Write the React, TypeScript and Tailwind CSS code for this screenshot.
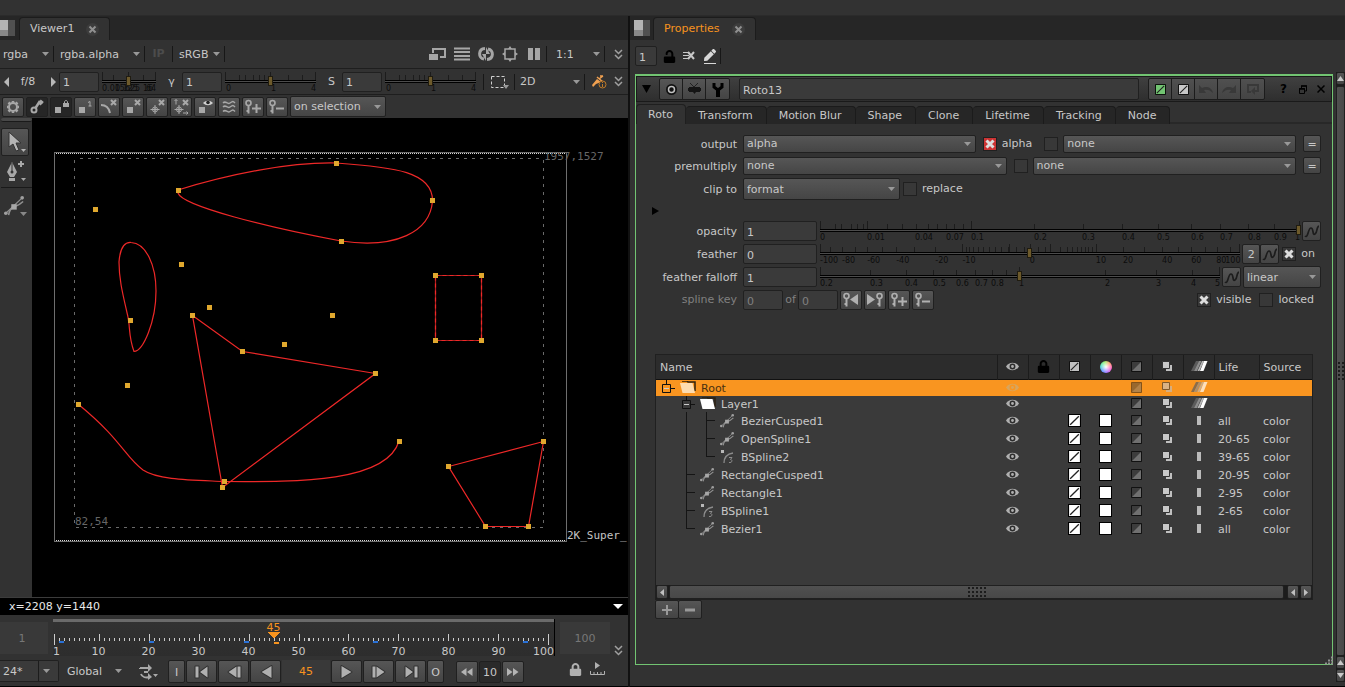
import React from "react";
import { FaLock, FaUnlock, FaPen } from "react-icons/fa";

const field =
  "min-w-0 rounded-xs border border-[#202020] bg-[#3a3a3a] px-[3px] pt-0.5 outline-none disabled:text-[#808080]";
const raised =
  "flex shrink-0 items-center justify-center rounded-xs border border-[#202020] bg-linear-to-b from-[#565656] to-[#444444]";

type IconProps = { children: React.ReactNode; w?: number; h?: number; className?: string };

const Icon = ({ children, w = 18, h = 18, className = "" }: IconProps) => (
  <svg
    width={w}
    height={h}
    viewBox={`0 0 ${w} ${h}`}
    fill="none"
    stroke="currentColor"
    className={`shrink-0 ${className}`}
    aria-hidden="true"
  >
    {children}
  </svg>
);

const Caret = ({ className = "" }: { className?: string }) => (
  <Icon w={7} h={4} className={className}>
    <path d="M0 0h7L3.500 4z" fill="currentColor" stroke="none" />
  </Icon>
);

const Sep = () => <span className="h-4 w-px shrink-0 bg-[#171717]" />;

type SelectProps = { label: string; value: string; className?: string; flat?: boolean; id?: string };

const Select = ({ label, value, className = "", flat = false, id }: SelectProps) => (
  <span
    className={`grid items-center ${
      flat ? "" : "rounded-xs border border-[#202020] bg-linear-to-b from-[#565656] to-[#454545]"
    } ${className}`}
  >
    <select
      id={id}
      aria-label={label}
      className="h-full w-full min-w-0 appearance-none bg-transparent px-[3px] pt-px outline-none [grid-area:1/1]"
    >
      <option>{value}</option>
    </select>
    <Caret className="pointer-events-none mr-1 justify-self-end text-[#999999] [grid-area:1/1]" />
  </span>
);

type CheckProps = { label: string; text?: boolean; checked?: boolean; red?: boolean };

const Check = ({ label, text = false, checked = false, red = false }: CheckProps) => (
  <label className="flex shrink-0 items-center gap-[5px]">
    <span className="grid place-items-center">
      <input
        type="checkbox"
        aria-label={label}
        defaultChecked={checked}
        className={`peer h-[14px] w-[14px] appearance-none border border-[#202020] [grid-area:1/1] ${
          red ? "bg-[#cc3333]" : "bg-[#383838]"
        }`}
      />
      <svg
        viewBox="0 0 10 10"
        className="pointer-events-none hidden h-[10px] w-[10px] [grid-area:1/1] peer-checked:block"
      >
        <path d="M1.500 1.500l7 7M8.500 1.500l-7 7" stroke="#dddddd" strokeWidth="3" />
      </svg>
    </span>
    {text && <span>{label}</span>}
  </label>
);

type RulerProps = {
  name: string;
  width: number;
  ticks: number[];
  tall: number[];
  labels: [number, string][];
  at: number;
  className?: string;
};

// Tick positions are given on a scale of `width` and drawn as percentages
const Ruler = ({ name, width, ticks, tall, labels, at, className = "" }: RulerProps) => {
  const pct = (n: number) => `${(n / width) * 100}%`;
  return (
    <div className={`grid h-5 min-w-0 ${className}`}>
      <svg className="h-5 w-full overflow-visible [grid-area:1/1]" shapeRendering="crispEdges">
        {ticks.map((t) => (
          <rect key={t} x={pct(t)} y="3" width="1" height="5" fill="#1c1c1c" />
        ))}
        {tall.map((t) => (
          <rect key={t} x={pct(t)} y="0" width="1" height="8" fill="#1c1c1c" />
        ))}
        <rect x="0" y="8" width="100%" height="1" fill="#000" />
        <rect x="0" y="9" width="100%" height="1" fill="#4c4c4c" />
        <rect x="0" y="10" width="100%" height="1" fill="#000" />
        {labels.map(([t, s]) => (
          <text key={s} x={pct(t)} y="19" fontSize="8" fill="#0c0c0c">
            {s}
          </text>
        ))}
      </svg>
      <input
        type="range"
        aria-label={name}
        min={0}
        max={width}
        defaultValue={at}
        className="h-[18px] w-full min-w-0 appearance-none bg-transparent [grid-area:1/1] [&::-webkit-slider-thumb]:h-[10px] [&::-webkit-slider-thumb]:w-[5px] [&::-webkit-slider-thumb]:appearance-none [&::-webkit-slider-thumb]:border [&::-webkit-slider-thumb]:border-[#201c10] [&::-webkit-slider-thumb]:bg-[#6d5a2b]"
      />
    </div>
  );
};

const KeyGlyph = () => (
  <>
    <circle cx="4.500" cy="5" r="2.500" strokeWidth="1.600" />
    <path d="M4.500 7.500v8M4.500 13h-2" strokeWidth="2" />
  </>
);

const KeyPlus = () => (
  <Icon>
    <KeyGlyph />
    <path d="M8 10.500h9M12.500 6v9" strokeWidth="2" />
  </Icon>
);

const KeyMinus = () => (
  <Icon>
    <KeyGlyph />
    <path d="M8 10.500h8" strokeWidth="2" />
  </Icon>
);

const Cross = () => <path d="M11 2l5 5M16 2l-5 5" strokeWidth="2" />;

const Target = () => (
  <>
    <circle cx="7" cy="11.500" r="2.500" />
    <path d="M7 7v9M2.500 11.500h9" />
    <path d="M6 10.500h2v2H6z" fill="currentColor" stroke="none" />
  </>
);

const shapeTools = [
  {
    name: "Settings",
    icon: (
      <Icon>
        <circle cx="9" cy="9" r="4" strokeWidth="2" />
        <path
          d="M9 3v1.500M9 13.500V15M3 9h1.500M13.500 9H15M4.500 4.500l1.500 1.500M12 12l1.500 1.500M13.500 4.500L12 6M4.500 13.500L6 12"
          strokeWidth="2.500"
        />
      </Icon>
    ),
  },
  {
    name: "Autokey",
    dark: true,
    icon: (
      <Icon>
        <circle cx="6" cy="12" r="2.500" strokeWidth="2" />
        <path d="M7.500 10L12 3M10.500 4.500l3 2M12 2.500l3 2.500" strokeWidth="2.500" />
      </Icon>
    ),
  },
  {
    name: "Lock handles",
    dark: true,
    icon: (
      <Icon>
        <path d="M3 9h6v6H3zM11 5h6v4h-6z" fill="currentColor" stroke="none" />
        <path d="M12.500 6V4c0-2 3-2 3 0v2" />
      </Icon>
    ),
  },
  {
    name: "Point numbers",
    icon: (
      <Icon>
        <path d="M3 9h6v6H3z" fill="currentColor" stroke="none" />
        <path d="M12 4.500l2-1V8M12.500 8h3" />
      </Icon>
    ),
  },
  {
    name: "Hide curves",
    icon: (
      <Icon>
        <path d="M1 7c5 0 8 3 9 8" strokeWidth="2" />
        <Cross />
      </Icon>
    ),
  },
  {
    name: "Hide points",
    icon: (
      <Icon>
        <path d="M3 9h6v6H3z" fill="currentColor" stroke="none" />
        <Cross />
      </Icon>
    ),
  },
  {
    name: "Hide transform",
    icon: (
      <Icon>
        <Target />
        <Cross />
      </Icon>
    ),
  },
  {
    name: "Hide transform on move",
    icon: (
      <Icon>
        <Target />
        <Cross />
        <path d="M4 1.500v5M2.500 3L4 1.500 5.500 3M11 15h5M14.500 13.500L16 15l-1.500 1.500" />
      </Icon>
    ),
  },
  {
    name: "Hide on drag",
    icon: (
      <Icon>
        <path d="M3 9h6v6H3z" fill="currentColor" stroke="none" />
        <path d="M7 5c3-3 7-3 10 0-3 3-7 3-10 0z" fill="#d0d0d0" stroke="none" />
        <circle cx="12" cy="4.500" r="1.800" fill="#222" stroke="none" />
      </Icon>
    ),
  },
  {
    name: "Ripple edit",
    icon: (
      <Icon>
        <path
          d="M3 5c3-3 4 2 7 0s3-2 5 0M3 9c3-3 4 2 7 0s3-2 5 0M3 13.500c3-3 4 2 7 0s3-2 5 0"
          strokeWidth="1.500"
        />
      </Icon>
    ),
  },
  { name: "Set key", icon: <KeyPlus /> },
  { name: "Delete key", icon: <KeyMinus /> },
];

const BezierIcon = ({ s = 14 }: { s?: number }) => (
  <svg width={s} height={s} viewBox="0 0 22 22" fill="none" stroke="#909090" className="shrink-0">
    <path d="M5 21C6 15 8 13 11 12s6-2 10-6" strokeWidth="1.800" />
    <path d="M2 19L20 2" strokeWidth="1.300" />
    <path d="M8 9h6v6H8z" fill="#a8a8a8" stroke="none" />
    <circle cx="20" cy="2" r="2" fill="#a0a0a0" stroke="none" />
    <circle cx="2" cy="19" r="2" fill="#a0a0a0" stroke="none" />
  </svg>
);

const BSplineIcon = () => (
  <svg width="14" height="14" viewBox="0 0 14 14" fill="none" stroke="#8c8c8c" className="shrink-0">
    <path d="M1 0h3v3H1z" fill="#b8b8b8" stroke="none" />
    <path d="M4 13C4 8 7 4 13 3" strokeWidth="1.300" />
    <path d="M9 7.500h3l-1.500 2c2 0 2 3-.500 3H9" strokeWidth="1" />
  </svg>
);

const Chevrons = () => (
  <Icon w={9} h={11} className="text-[#a0a0a0]">
    <path d="M1 1l3.500 3.500L8 1M1 6l3.500 3.500L8 6" strokeWidth="1.500" />
  </Icon>
);

const PaneIcon = ({ className = "" }: { className?: string }) => (
  <Icon w={16} h={16} className={className}>
    <g stroke="none">
      <path d="M0 0h9v10H0z" fill="#b4b4b4" />
      <path d="M0 10h9v6H0z" fill="#888888" />
      <path d="M9 0h7v16H9z" fill="#505050" />
    </g>
  </Icon>
);

const PaneTab = ({ title, active }: { title: string; active?: boolean }) => (
  <div
    className={`flex h-[23px] items-center gap-3 self-end rounded-t-sm border border-b-0 border-[#1c1c1c] bg-[#323232] px-[10px] ${
      active ? "text-[#f7931e]" : ""
    }`}
  >
    <span>{title}</span>
    <button aria-label={`Close ${title}`} className="rounded-full bg-[#3c3c3c] p-0.5">
      <Icon w={9} h={9} className="text-[#909090]">
        <path d="M1.500 1.500l6 6M7.500 1.500l-6 6" strokeWidth="2" />
      </Icon>
    </button>
  </div>
);

const exposureTicks = { width: 91, ticks: [14, 20, 28, 34, 39, 63, 77], tall: [0, 45, 90] };

const markers = [
  [178, 190], [336, 163], [432, 200], [341, 241], [95, 209], [181, 264], [209, 307],
  [130, 320], [192, 315], [332, 315], [284, 344], [242, 351], [127, 385], [375, 373],
  [78, 404], [399, 441], [224, 481], [222, 487], [435, 275], [481, 275], [435, 340],
  [481, 340], [448, 466], [543, 441], [485, 526], [528, 526],
];

const Canvas = () => (
  <svg className="min-w-0 flex-1 bg-black" fill="none">
    <g transform="translate(-32 -118)">
      <g shapeRendering="crispEdges">
        <path d="M54.500 152.500H566.500V541.500H54.500z" stroke="#6e6e6e" />
        <path d="M56 153.500H566M56 540.500H566" stroke="#d8d8d8" strokeDasharray="1 1" />
        <path d="M80 158.500H543M74.500 160V527M543.500 160V527M76 527.500H543" stroke="#6a6a6a" strokeDasharray="3 5" />
      </g>
      <g stroke="#ee2828" strokeWidth="1.200">
        <path d="M178 190C230 174 290 162 336 163C395 167 433 172 432.500 201C430 232 396 249 341 241C270 228 182 206 178 193z" />
        <path d="M128 317C123 295 119 280 119 262C120 249 124 242 131 242.500C146 243 156 265 156 291C156 322 143 351 134 351.500C130 341 130 335 129 324L128 317" />
        <path d="M192.500 315.500L242.500 351.500L375.500 373.500L222.500 487.500z" />
        <path d="M78 404C122 440 125 457 143 470C158 480 190 480 224 481.500C300 482 387 482 399 441" />
        <path d="M543.500 441.500L528.500 526.500H485.500L448.500 466.500z" />
        <path d="M435.500 275.500H481.500V340.500H435.500z" stroke="#b02020" />
        <path d="M435.500 275.500H481.500V340.500H435.500z" strokeDasharray="4 3" />
      </g>
      <g fill="#e0a82e" shapeRendering="crispEdges">
        {markers.map(([x, y]) => (
          <rect key={`${x}-${y}`} x={x - 2} y={y - 2} width="5" height="5" />
        ))}
      </g>
      <g fontSize="11" fill="#666666" className="font-['DejaVu_Sans_Mono',monospace]">
        <text x="544" y="160">1957,1527</text>
        <text x="75" y="525">82,54</text>
        <text x="567" y="539" fill="#c4c4c4">2K_Super_</text>
      </g>
    </g>
  </svg>
);

const frames = Array.from({ length: 100 }, (_, i) => i + 1);
const frameX = (f: number) => `${0.1 + (f - 1) * 0.998}%`;

const Timeline = () => (
  <svg
    className="h-[37px] min-w-0 flex-1 overflow-visible bg-linear-to-b from-[#323232] to-[#2d2d2d]"
    shapeRendering="crispEdges"
  >
    <rect width="100%" height="3" fill="#6a6a6a" />
    {frames.map((f) => {
      const end = f === 1 || f === 100;
      const ten = f % 10 === 0;
      return (
        <rect
          key={f}
          x={frameX(f)}
          y={end || ten ? 15 : 19}
          width="1"
          height={end ? 11 : ten ? 7 : 3}
          fill="#cccccc"
        />
      );
    })}
    {[2, 20, 39, 65, 95].map((f) => (
      <rect key={f} x={frameX(f)} y="22" width="5" height="2" fill="#2a72d8" />
    ))}
    <rect x={frameX(45)} y="23" width="5" height="2" fill="#f7931e" />
    <svg x={frameX(45)} y="13" width="14" height="8" overflow="visible">
      <path d="M-6 0H7L.500 7z" fill="#f7931e" />
    </svg>
    <text x={frameX(45)} y="12" fontSize="11" textAnchor="middle" fill="#f7931e">
      45
    </text>
    <g fontSize="11" fill="#c8c8c8" textAnchor="middle">
      <text x="0.700%" y="36">1</text>
      {[10, 20, 30, 40, 50, 60, 70, 80, 90].map((f) => (
        <text key={f} x={frameX(f)} y="36">
          {f}
        </text>
      ))}
      <text x="100%" y="36" textAnchor="end">
        100
      </text>
    </g>
  </svg>
);

const transportBack = [
  { name: "First frame", d: "M2.500 3.500h3v11h-3zM14.500 3.500v11L7 9z" },
  { name: "Previous keyframe", d: "M11.500 3.500v11L3.500 9zM12.500 3.500h3v11h-3z" },
  { name: "Play backward", d: "M14.500 3v12L4.500 9z" },
];
const transportForward = [
  { name: "Play forward", d: "M3.500 3v12l10-6z" },
  { name: "Next keyframe", d: "M6.500 3.500v11l8-5.500zM2.500 3.500h3v11h-3z" },
  { name: "Last frame", d: "M3.500 3.500v11L11 9zM12.500 3.500h3v11h-3z" },
];

const Transport = ({ items }: { items: { name: string; d: string }[] }) => (
  <>
    {items.map(({ name, d }) => (
      <button key={name} aria-label={name} className={`${raised} h-[23px] w-[31px]`}>
        <Icon>
          <path d={d} stroke="#303030" strokeWidth="2" strokeLinejoin="round" />
          <path d={d} fill="#b0b0b0" stroke="none" />
        </Icon>
      </button>
    ))}
  </>
);

const Viewer = () => (
  <section className="flex min-w-0 flex-col border-r-2 border-[#111111]">
    <div className="flex h-6 items-center bg-[#262626]">
      <PaneIcon className="mr-1 -ml-px" />
      <PaneTab title="Viewer1" />
    </div>
    <div className="flex h-7 items-center">
      <Select flat label="Channels" value="rgba" className="w-[53px]" />
      <Sep />
      <Select flat label="Alpha channel" value="rgba.alpha" className="ml-[3px] w-[87px]" />
      <Sep />
      <button className="w-[27px] font-bold text-[#4c4c4c]">IP</button>
      <Sep />
      <Select flat label="Viewer process" value="sRGB" className="ml-[3px] w-12" />
      <Sep />
      <div className="ml-auto flex items-center gap-2 text-[#a6a6a6]">
        <Icon w={17} h={14}>
          <path d="M4 6V2h12v8h-5" strokeWidth="2" />
          <path d="M0 7h9v6H0z" fill="currentColor" stroke="none" />
        </Icon>
        <Icon w={16} h={14}>
          <path d="M0 1.500h16M0 5h16M0 9h16M0 12.500h16" strokeWidth="2" />
        </Icon>
        <Icon w={16} h={16}>
          <path d="M7 2.500C0 3 0 12 6 13M9 13.500C16 13 16 4 10 3" strokeWidth="3" />
          <path d="M4 8l4 0v7zM12 8H8V1z" fill="currentColor" stroke="none" />
        </Icon>
        <Icon w={16} h={16}>
          <path d="M3 3h10v10H3z" strokeWidth="1.500" />
          <path d="M6 3l2-3 2 3zM6 13l2 3 2-3zM3 6L0 8l3 2zM13 6l3 2-3 2z" fill="currentColor" stroke="none" />
        </Icon>
        <Icon w={16} h={14}>
          <path d="M2 1h5v12H2zM9 1h5v12H9z" fill="currentColor" stroke="none" />
        </Icon>
      </div>
      <div className="ml-1 flex items-center">
        <Sep />
        <Select flat label="Zoom" value="1:1" className="ml-1.5 w-[51px]" />
        <Sep />
        <span className="ml-[9px] pr-[5px]">
          <Chevrons />
        </span>
      </div>
    </div>
    <div className="flex h-[27px] items-center border-y border-[#1e1e1e]">
      <button aria-label="Decrease stop" className="ml-1">
        <Icon w={5} h={10} className="text-[#b8b8b8]">
          <path d="M5 0v10L0 5z" fill="currentColor" stroke="none" />
        </Icon>
      </button>
      <span className="w-[42px] pr-1 text-center">f/8</span>
      <button aria-label="Increase stop">
        <Icon w={5} h={10} className="text-[#b8b8b8]">
          <path d="M0 0v10l5-5z" fill="currentColor" stroke="none" />
        </Icon>
      </button>
      <input aria-label="Gain" defaultValue="1" className={`${field} ml-[3px] h-5 w-10`} />
      <Ruler
        name="Gain slider"
        width={54}
        ticks={[11, 41]}
        tall={[0, 26, 53]}
        labels={[[0, "0.015625"], [13, "0.125"], [41, "16"], [44, "64"]]}
        at={26}
        className="ml-[3px] w-[54px]"
      />
      <span className="ml-[5px]">
        <Sep />
      </span>
      <label htmlFor="gamma" className="w-[21px] text-center">γ</label>
      <input id="gamma" defaultValue="1" className={`${field} h-5 w-10`} />
      <Ruler name="Gamma slider" {...exposureTicks} labels={[[1, "0"], [46, "1"], [86, "4"]]} at={45} className="ml-[3px] w-[91px]" />
      <span className="ml-[5px]">
        <Sep />
      </span>
      <label htmlFor="saturation" className="w-[21px] text-center">S</label>
      <input id="saturation" defaultValue="1" className={`${field} h-5 w-10`} />
      <Ruler name="Saturation slider" {...exposureTicks} labels={[[1, "0"], [46, "1"], [86, "4"]]} at={45} className="ml-[3px] w-[91px]" />
      <div className="ml-auto flex items-center">
        <Sep />
        <button aria-label="Region of interest" className="mr-1 ml-1.5">
          <Icon w={20} h={14} className="text-[#d0d0d0]">
            <path d="M1.500 1.500h13v11h-13z" strokeDasharray="3 2" />
            <path d="M13 10h6l-3 4z" fill="#999" stroke="none" />
          </Icon>
        </button>
        <Sep />
        <Select flat label="View mode" value="2D" className="ml-0.5 w-[67px]" />
        <Sep />
        <Icon w={15} h={14} className="mx-[7px] text-[#c07a28]">
          <path d="M0 10l5-6 4 3-5 2-3 3z" fill="#f0a050" stroke="none" />
          <path d="M5 2l6 5M8 1h3M7 4l4-3" stroke="#f0a050" strokeWidth="1.500" />
          <circle cx="10.500" cy="9.500" r="3.500" fill="#323232" />
          <path d="M10.500 7v1M10.500 9v3" />
        </Icon>
        <span className="pr-[5px]">
          <Chevrons />
        </span>
      </div>
    </div>
    <div className="flex h-[23px] items-center gap-0.5 pl-0.5">
      {shapeTools.map(({ name, icon, dark }) => (
        <button
          key={name}
          aria-label={name}
          className={`flex h-5 w-[22px] shrink-0 items-center justify-center rounded-xs border border-[#202020] text-[#a8a8a8] ${
            dark ? "bg-[#262626]" : "bg-linear-to-b from-[#565656] to-[#444444]"
          }`}
        >
          {icon}
        </button>
      ))}
      <Select label="Show handles" value="on selection" className="h-[21px] w-[96px]" />
    </div>
    <div className="flex min-h-0 flex-1">
      <div className="flex w-8 shrink-0 flex-col items-start pl-px">
        <span className="mb-1.5 flex h-1 w-full justify-center rounded-xs border-b border-[#1a1a1a] bg-[#484848]" />
        <button aria-label="Select" className={`${raised} h-7 w-7`}>
          <Icon w={22} h={22} className="text-[#b4b4b4]">
            <path d="M5 1v15l4-3 3 7 3-1-3-7h5z" fill="currentColor" stroke="#333" />
            <path d="M17 18h5l-2.500 3z" fill="currentColor" stroke="none" />
          </Icon>
        </button>
        <button aria-label="Add points" className="flex h-[31px] w-7 items-center justify-center">
          <Icon w={22} h={22} className="text-[#a8a8a8]">
            <path d="M8 1l5 10-3 5H6l-3-5zM5 17h6v3H5z" fill="currentColor" stroke="none" />
            <path d="M8 2v8" stroke="#333333" />
            <circle cx="8" cy="11" r="1.500" fill="#333333" stroke="none" />
            <path d="M17 0v6M14 3h6" strokeWidth="2" />
            <path d="M17 17h5l-2.500 3z" fill="currentColor" stroke="none" />
          </Icon>
        </button>
        <span className="h-px w-full bg-[#191919]" />
        <button aria-label="Bezier" className="mt-0.5 flex h-8 w-7 items-center justify-center">
          <BezierIcon s={20} />
          <Caret className="mt-4 -ml-1 text-[#888888]" />
        </button>
      </div>
      <Canvas />
    </div>
    <div className="flex h-[18px] items-center justify-between border-t border-[#3c3c3c] bg-black pr-[5px] pl-[9px] text-[#e8e8e8]">
      <span>x=2208 y=1440</span>
      <Icon w={10} h={5} className="text-white">
        <path d="M0 0h10L5 5z" fill="currentColor" stroke="none" />
      </Icon>
    </div>
    <div className="flex h-[45px] items-center text-[#777777]">
      <div className="flex h-8 w-12 shrink-0 items-center justify-center bg-[#393939] pt-0.5 pr-1">
        <span>1</span>
      </div>
      <div className="mr-[5px] ml-[5px] flex min-w-0 flex-1 border-r border-black">
        <Timeline />
      </div>
      <div className="flex h-8 w-[50px] shrink-0 items-center justify-center bg-[#393939] pt-0.5">
        <span>100</span>
      </div>
      <span className="self-end pr-[5px] pb-1 pl-1">
        <Chevrons />
      </span>
    </div>
    <div className="flex h-[27px] items-start border-b border-black">
      <div className="flex h-[22px] w-[59px] rounded-r-xs border border-l-0 border-[#202020] bg-[#3a3a3a]">
        <Select flat label="Frame rate" value="24*" className="w-full bg-[linear-gradient(to_right,transparent_38px,#1c1c1c_38px,#1c1c1c_39px,transparent_39px)] pr-1" />
      </div>
      <Select flat label="Frame range" value="Global" className="ml-[5px] h-[22px] w-[62px]" />
      <span className="mt-1 ml-[3px]">
        <Sep />
      </span>
      <button aria-label="Playback mode" className="mx-2.5 mt-1">
        <Icon w={19} h={16} className="text-[#a8a8a8]">
          <path d="M1 4h9M1 4v1M2 10c1 3 5 4 9 3M5 8h4" strokeWidth="2" />
          <path d="M9 0v8l4-4zM9 9v7l4-3zM14 10h5l-2.500 3z" fill="currentColor" stroke="none" />
        </Icon>
      </button>
      <div className="flex gap-px">
        <button className={`${raised} h-[23px] w-[17px] pt-0.5`}>I</button>
        <Transport items={transportBack} />
        <input
          aria-label="Current frame"
          defaultValue="45"
          className="h-[23px] w-12 min-w-0 bg-[#393939] text-center text-[#f7931e] outline-none"
        />
        <Transport items={transportForward} />
        <button className={`${raised} h-[23px] w-[17px] pt-0.5`}>O</button>
      </div>
      <div className="ml-3 flex gap-px">
        <button aria-label="Skip back" className={`${raised} mt-px h-[22px] w-[22px]`}>
          <Icon w={12} h={8} className="text-[#b4b4b4]">
            <path d="M5.500 0v8L0 4zM11.500 0v8L6 4z" fill="currentColor" stroke="none" />
          </Icon>
        </button>
        <input
          aria-label="Frame increment"
          defaultValue="10"
          className="mt-px h-[22px] w-[22px] min-w-0 rounded-xs border border-[#202020] bg-[#2a2a2a] text-center outline-none"
        />
        <button aria-label="Skip forward" className={`${raised} mt-px h-[22px] w-[22px]`}>
          <Icon w={12} h={8} className="text-[#b4b4b4]">
            <path d="M0 0v8l5.500-4zM6 0v8l5.500-4z" fill="currentColor" stroke="none" />
          </Icon>
        </button>
      </div>
      <div className="mt-0.5 mr-[23px] ml-auto flex items-center gap-2 text-[#b0b0b0]">
        <FaLock size={13} />
        <Icon w={15} h={14}>
          <path d="M5 0v7l5-3.500z" fill="currentColor" stroke="none" />
          <path d="M.500 9v3.500h14V9M4 10v2M7.500 10v2M11 10v2" />
        </Icon>
      </div>
    </div>
  </section>
);

const Slash = ({ fill, s = 12 }: { fill: string; s?: number }) => (
  <svg width={s} height={s} viewBox="0 0 12 12" className="inline-block">
    <path d="M.500.500h11v11H.500z" fill={fill} stroke="#000" />
    <path d="M2 10l8-8" stroke="#222" strokeWidth="1.200" />
  </svg>
);

const Invert = () => (
  <svg width="11" height="11" viewBox="0 0 11 11" className="inline-block">
    <path d="M.500.500h10v10H.500z" fill="#3c3c3c" stroke="#111" />
    <path d="M10 1v9H1z" fill="#707070" />
  </svg>
);

const Blend = () => (
  <svg width="11" height="11" viewBox="0 0 11 11" className="inline-block">
    <path d="M4 4h6v6H4z" fill="#c0c0c0" />
    <path d="M.500.500h7v7h-7z" fill="#c8c8c8" stroke="#333" />
  </svg>
);

const Blur = () => (
  <svg width="18" height="11" viewBox="0 0 18 11" className="inline-block">
    <path d="M1 10L6 0h3L4 10z" fill="#5c5c5c" />
    <path d="M4 10L9 0h2.500L7 10z" fill="#8c8c8c" />
    <path d="M7.500 10L12 0h2L9.500 10z" fill="#b8b8b8" />
    <path d="M10 10L14 0h3.500l-4 10z" fill="#ffffff" />
  </svg>
);

const Wheel = () => (
  <span className="inline-block h-3 w-3 rounded-full bg-[radial-gradient(circle,white,transparent_75%),conic-gradient(from_45deg,#ff9060,#ff50c0,#a060ff,#5090ff,#40e0c0,#90f060,#ff9060)] align-middle" />
);

// Fold box of a tree row, with the stub of its branch on either side
const Box = () => (
  <Icon w={15} h={16}>
    <path d="M5.500 0v4M1.500 4.500h8v8h-8zM10 8.500h4" stroke="#111111" />
    <path d="M3 8.500h5" stroke="#cccccc" />
  </Icon>
);

const Folder = () => (
  <svg width="16" height="13" viewBox="0 0 16 13" className="shrink-0">
    <path d="M2 0h5l1 1h7v9" fill="none" stroke="#2c2010" strokeWidth="1.500" />
    <path d="M0 2h12.500L15 12H2.500z" fill="currentColor" />
  </svg>
);

// Branch lines of the shape tree; `last` ends the vertical line at the elbow
const Branch = ({ last }: { last?: boolean }) => (
  <svg width="20" height="18" viewBox="0 0 20 18" className="shrink-0" shapeRendering="crispEdges">
    <rect x="10" y="0" width="1" height={last ? 9 : 18} fill="#151515" />
    <rect x="10" y="8" width="9" height="1" fill="#151515" />
  </svg>
);

const Trunk = () => (
  <svg width="20" height="18" viewBox="0 0 20 18" className="shrink-0" shapeRendering="crispEdges">
    <rect x="10" y="0" width="1" height="18" fill="#151515" />
  </svg>
);

const shapes = [
  { name: "BezierCusped1", life: "all", nested: true },
  { name: "OpenSpline1", life: "20-65", nested: true },
  { name: "BSpline2", life: "39-65", nested: true, bspline: true, last: true },
  { name: "RectangleCusped1", life: "20-95" },
  { name: "Rectangle1", life: "2-95" },
  { name: "BSpline1", life: "2-65", bspline: true },
  { name: "Bezier1", life: "all", last: true },
];

const headCell = "border-r border-[#1c1c1c] p-0 text-center font-normal";

const Eye = ({ className = "text-[#b0b0b0]" }: { className?: string }) => (
  <Icon w={13} h={9} className={`inline-block ${className}`}>
    <path d="M0 4.500C3-.500 10-.500 13 4.500 10 9.500 3 9.500 0 4.500z" fill="currentColor" stroke="none" />
    <circle cx="6.500" cy="4.500" r="2.200" stroke="#2c2c2c" strokeWidth="1.500" />
  </Icon>
);

const FadedEye = () => (
  <Icon w={13} h={9} className="inline-block text-[#d9a55c]">
    <path d="M0 4.500C3-.500 10-.500 13 4.500 10 9.500 3 9.500 0 4.500z" fill="currentColor" stroke="none" />
    <circle cx="6.500" cy="4.500" r="2.200" stroke="#f99520" strokeWidth="1.500" />
  </Icon>
);

const ShapeTable = () => (
  <div className="mr-[19px] ml-[19px] flex min-h-0 flex-1 flex-col border border-[#202020] bg-[#3a3a3a]">
    <table className="w-full table-fixed border-collapse">
      <thead>
        <tr className="h-6 border-b border-[#111111] bg-[#2c2c2c]">
          <th className={`${headCell} pt-0.5 pl-1 text-left`}>Name</th>
          <th className={`${headCell} w-[31px]`}><Eye /></th>
          <th className={`${headCell} w-[31px]`}><FaLock size={13} className="inline-block text-black" /></th>
          <th className={`${headCell} w-[31px]`}><Slash fill="#c0c0c0" s={11} /></th>
          <th className={`${headCell} w-[31px]`}><Wheel /></th>
          <th className={`${headCell} w-[31px]`}><Invert /></th>
          <th className={`${headCell} w-[31px]`}><Blend /></th>
          <th className={`${headCell} w-[31px]`}><Blur /></th>
          <th className={`${headCell} w-[45px] pt-0.5 pl-1 text-left`}>Life</th>
          <th className="w-[53px] p-0 pt-0.5 pl-1 text-left font-normal">Source</th>
        </tr>
      </thead>
      <tbody className="text-center [&_td]:p-0">
        <tr className="h-4 bg-[#f99520] text-[#4a3010]">
          <td>
            <div className="flex h-4 items-center pl-[5px]">
              <Box />
              <span className="mr-[5px] ml-1 text-[#fddcb0]"><Folder /></span>
              <span className="pt-0.5">Root</span>
            </div>
          </td>
          <td><FadedEye /></td>
          <td /><td /><td />
          <td className="opacity-50"><Invert /></td>
          <td className="opacity-60"><Blend /></td>
          <td className="opacity-70"><Blur /></td>
          <td /><td />
        </tr>
        <tr className="h-4">
          <td>
            <div className="flex h-4 items-center pl-[25px]">
              <Box />
              <span className="mr-[5px] ml-1 text-white"><Folder /></span>
              <span className="pt-0.5">Layer1</span>
            </div>
          </td>
          <td><Eye /></td>
          <td /><td /><td />
          <td><Invert /></td>
          <td><Blend /></td>
          <td><Blur /></td>
          <td /><td />
        </tr>
        {shapes.map(({ name, life, nested, bspline, last }) => (
          <tr key={name} className="h-[18px]">
            <td>
              <div className="flex h-[18px] items-center pl-5">
                {nested && <Trunk />}
                <Branch last={last} />
                <span className="mr-1.5 ml-1 w-[15px]">{bspline ? <BSplineIcon /> : <BezierIcon />}</span>
                <span className="pt-0.5">{name}</span>
              </div>
            </td>
            <td><Eye /></td>
            <td />
            <td><Slash fill="#ffffff" s={13} /></td>
            <td><span className="inline-block h-[13px] w-[13px] border border-black bg-white align-middle" /></td>
            <td><Invert /></td>
            <td><Blend /></td>
            <td><span className="inline-block h-[9px] w-1 bg-[#bbbbbb] align-middle" /></td>
            <td className="text-left"><div className="pt-0.5 pl-1">{life}</div></td>
            <td className="text-left"><div className="pt-0.5 pl-1">color</div></td>
          </tr>
        ))}
      </tbody>
    </table>
    <div className="mt-auto flex h-[14px] gap-px bg-[#1c1c1c]">
      <button aria-label="Scroll left" className={`${raised} w-3`}>
        <Icon w={4} h={7}><path d="M4 0v7L0 3.500z" fill="#c0c0c0" stroke="none" /></Icon>
      </button>
      <div className="flex flex-1 items-center justify-center rounded-xs border border-[#202020] bg-linear-to-b from-[#505050] to-[#484848]">
        <Icon w={18} h={10}>
          <path d="M0 1h18M0 5h18M0 9h18" stroke="#1c1c1c" strokeWidth="2" strokeDasharray="2 2" />
        </Icon>
      </div>
      <button aria-label="Page left" className={`${raised} ml-0.5 w-3`}>
        <Icon w={4} h={7}><path d="M4 0v7L0 3.500z" fill="#c0c0c0" stroke="none" /></Icon>
      </button>
      <button aria-label="Scroll right" className={`${raised} w-3`}>
        <Icon w={4} h={7}><path d="M0 0v7l4-3.500z" fill="#c0c0c0" stroke="none" /></Icon>
      </button>
    </div>
  </div>
);

const Row = ({ label, id, h = "h-5", children }: { label: string; id: string; h?: string; children: React.ReactNode }) => (
  <div className={`flex items-center ${h}`}>
    <label htmlFor={id} className="mr-1.5 w-[101px] shrink-0 pt-0.5 text-right">
      {label}
    </label>
    {children}
  </div>
);

const CurveButton = () => (
  <button type="button" aria-label="Animation" className={`${raised} h-5 w-[19px]`}>
    <Icon w={15} h={13} className="text-[#1c1c1c]">
      <path d="M1 11C4 14 4 3 7 3s1 8 4 6 1-7 4-8" strokeWidth="1.700" />
    </Icon>
  </button>
);

const tabs = ["Roto", "Transform", "Motion Blur", "Shape", "Clone", "Lifetime", "Tracking", "Node"];

const EqualsButton = () => <button type="button" className={`${raised} ml-[7px] h-[17px] w-[18px] pt-0.5`}>=</button>;

const headButton = "flex h-5 w-[23px] items-center justify-center border-r border-[#1c1c1c] last:border-r-0";

const PropertiesPanel = () => (
  <div className="flex min-w-0 flex-1 flex-col border border-t-2 border-[#72c472]">
    <header className="flex h-[26px] items-center border border-[#1a1a1a] bg-linear-to-b from-[#404040] to-[#2e2e2e] pr-1.5 pl-[5px] text-black">
      <button aria-label="Collapse">
        <Icon w={9} h={8}><path d="M0 0h9L4.500 8z" fill="#000" stroke="none" /></Icon>
      </button>
      <div className="ml-[8px] flex shrink-0 rounded-xs border border-[#1c1c1c] bg-linear-to-b from-[#565656] to-[#444444]">
        <button aria-label="Center node" className={headButton}>
          <Icon w={11} h={11}>
            <circle cx="5.500" cy="5.500" r="5.500" fill="#111" stroke="none" />
            <circle cx="5.500" cy="5.500" r="3" stroke="#c0c0c0" strokeWidth="1.500" />
          </Icon>
        </button>
        <button aria-label="Input" className={headButton}>
          <Icon w={13} h={12}>
            <path d="M1 4h11v5H8l-1.500 2L5 9H1zM0 5h1v3H0zM12 5h1v3h-1z" fill="#151515" stroke="none" />
            <path d="M2 0l4 4 4-4" stroke="#222222" />
          </Icon>
        </button>
        <button aria-label="Tools" className={headButton}>
          <Icon w={12} h={15}>
            <path d="M2 1v4l4 3 4-3V1" strokeWidth="3" />
            <path d="M6 6v9" strokeWidth="4" />
          </Icon>
        </button>
      </div>
      <input aria-label="Node name" defaultValue="Roto13" className={`${field} mx-[9px] h-[22px] flex-1 text-[#c8c8c8]`} />
      <div className="flex shrink-0 rounded-xs border border-[#1c1c1c] bg-linear-to-b from-[#505050] to-[#444444]">
        <button aria-label="Node color" className={headButton}><Slash fill="#72c472" s={11} /></button>
        <button aria-label="Control color" className={headButton}><Slash fill="#c8c8c8" s={11} /></button>
        <button aria-label="Undo" className={headButton}>
          <Icon w={14} h={9}><path d="M0 0v8h7L5 5c3-1 6 0 9 3-1-6-7-7-11-5z" fill="#393939" stroke="none" /></Icon>
        </button>
        <button aria-label="Redo" className={headButton}>
          <Icon w={14} h={9}><path d="M14 0v8H7l2-3C6 4 3 5 0 8c1-6 7-7 11-5z" fill="#393939" stroke="none" /></Icon>
        </button>
        <button aria-label="Revert" className={headButton}>
          <Icon w={12} h={11}><path d="M4 8H1V1h10v6H8" stroke="#393939" strokeWidth="2" /><path d="M8 3v8L4 7z" fill="#393939" stroke="none" /></Icon>
        </button>
      </div>
      <button className="ml-[15px] text-[12px] font-bold">?</button>
      <button aria-label="Float" className="ml-3">
        <Icon w={8} h={9}>
          <path d="M2.500 3V1h5v5H6M.500 3.500h5v5h-5z" />
          <path d="M0 4h6M2 1h6" strokeWidth="1.500" />
        </Icon>
      </button>
      <button aria-label="Close" className="ml-[10px]">
        <Icon w={8} h={8}><path d="M.500.500l7 7M7.500.500l-7 7" strokeWidth="1.500" /></Icon>
      </button>
    </header>

    <div className="mt-0.5 flex h-5 items-end border-b-2 border-[#282828]">
      {tabs.map((tab, i) => (
        <button
          key={tab}
          className={
            i === 0
              ? "-mb-0.5 h-5 rounded-t-sm border border-b-0 border-[#1f1f1f] bg-[#323232] pr-3 pl-[11px] pt-px"
              : "-mb-0.5 h-[18px] rounded-t-sm border border-b-0 border-l-0 border-[#1b1b1b] bg-[#262626] pr-[13px] pl-3 pt-px"
          }
        >
          {tab}
        </button>
      ))}
    </div>

    <form className="flex flex-col pt-[11px] pr-[11px]">
      <Row label="output" id="output" h="h-[17px]">
        <Select id="output" label="output" value="alpha" className="h-[18px] flex-1" />
        <span className="mr-3 ml-[7px]"><Check label="alpha" text checked red /></span>
        <Check label="Second mask" />
        <Select label="Mask" value="none" className="ml-[5px] h-[18px] flex-1" />
        <EqualsButton />
      </Row>
      <div className="h-[5px]" />
      <Row label="premultiply" id="premultiply" h="h-[17px]">
        <Select id="premultiply" label="premultiply" value="none" className="mr-[7px] h-[18px] flex-1" />
        <Check label="Invert mask" />
        <Select label="Premultiply mask" value="none" className="ml-[5px] h-[18px] flex-1" />
        <EqualsButton />
      </Row>
      <div className="h-1" />
      <Row label="clip to" id="clip" h="h-[22px]">
        <Select id="clip" label="clip to" value="format" className="mr-[3px] h-[22px] w-[157px]" />
        <Check label="replace" text />
      </Row>
      <button type="button" aria-label="Expand" className="flex h-[21px] items-center pl-4">
        <Icon w={7} h={8}><path d="M0 0v8l7-4z" fill="#000" stroke="none" /></Icon>
      </button>

      <div className="flex flex-col gap-[3px]">
        <Row label="opacity" id="opacity">
          <input id="opacity" defaultValue="1" className={`${field} h-5 w-[74px]`} />
          <Ruler
            name="Opacity slider"
            width={481}
            ticks={[15, 21, 31, 37, 43, 67, 82, 96, 108, 117, 126, 134, 143, 214, 263, 302, 338, 371, 400, 428, 454]}
            tall={[0, 47, 151, 479]}
            labels={[[0, "0"], [47, "0.01"], [95, "0.04"], [126, "0.07"], [151, "0.1"], [214, "0.2"], [262, "0.3"], [302, "0.4"], [337, "0.5"], [371, "0.6"], [400, "0.7"], [428, "0.8"], [454, "0.9"], [475, "1"]]}
            at={481}
            className="ml-[3px] mr-px flex-1"
          />
          <CurveButton />
        </Row>
        <Row label="feather" id="feather">
          <input id="feather" defaultValue="0" className={`${field} h-5 w-[74px]`} />
          <Ruler
            name="Feather slider"
            width={419}
            ticks={[10, 22, 35, 47, 62, 76, 94, 115, 146, 149, 153, 158, 162, 168, 174, 180, 187, 195, 203, 217, 224, 239, 246, 251, 256, 260, 264, 267, 271, 302, 323, 341, 357, 370, 384, 396, 409]}
            tall={[0, 142, 188, 209, 229, 275, 418]}
            labels={[[0, "-100"], [22, "-80"], [47, "-60"], [76, "-40"], [115, "-20"], [142, "-10"], [209, "0"], [275, "10"], [302, "20"], [341, "40"], [370, "60"], [395, "80"], [404, "100"]]}
            at={209}
            className="mr-0.5 ml-[3px] flex-1"
          />
          <button type="button" className={`${raised} h-5 w-[18px] pt-0.5`}>2</button>
          <CurveButton />
          <span className="mr-1.5 ml-[3px]"><Check label="on" text checked /></span>
        </Row>
        <Row label="feather falloff" id="falloff">
          <input id="falloff" defaultValue="1" className={`${field} h-5 w-[74px]`} />
          <Ruler
            name="Feather falloff slider"
            width={400}
            ticks={[50, 86, 113, 136, 155, 172, 186, 285, 336, 372]}
            tall={[0, 199, 399]}
            labels={[[0, "0.2"], [50, "0.3"], [85, "0.4"], [113, "0.5"], [136, "0.6"], [155, "0.7"], [171, "0.8"], [199, "1"], [285, "2"], [336, "3"], [371, "4"], [395, "5"]]}
            at={199}
            className="mr-0.5 ml-[3px] flex-1"
          />
          <CurveButton />
          <Select label="Falloff type" value="linear" className="ml-0.5 h-[22px] w-[78px]" />
        </Row>
        <div className="flex items-center">
          <label htmlFor="splinekey" className="mr-1.5 w-[101px] text-right text-[#808080]">spline key</label>
          <input id="splinekey" defaultValue="0" disabled className={`${field} h-5 w-10`} />
          <span className="w-[15px] text-center text-[#808080]">of</span>
          <input aria-label="Key count" defaultValue="0" disabled className={`${field} h-5 w-10`} />
          <div className="ml-0.5 flex gap-0.5 text-[#b0b0b0]">
            <button type="button" aria-label="Previous key" className={`${raised} h-5 w-[22px]`}>
              <Icon><KeyGlyph /><path d="M16 3v11L8 8.500z" fill="currentColor" stroke="none" /></Icon>
            </button>
            <button type="button" aria-label="Next key" className={`${raised} h-5 w-[22px]`}>
              <Icon><g transform="translate(9 0)"><KeyGlyph /></g><path d="M1 3v11l8-5.500z" fill="currentColor" stroke="none" /></Icon>
            </button>
            <button type="button" aria-label="Add key" className={`${raised} h-5 w-[22px]`}><KeyPlus /></button>
            <button type="button" aria-label="Remove key" className={`${raised} h-5 w-[22px]`}><KeyMinus /></button>
          </div>
          <div className="mr-[7px] ml-auto flex gap-2">
            <Check label="visible" text checked />
            <Check label="locked" text />
          </div>
        </div>
      </div>
    </form>

    <div className="mt-11 flex min-h-0 flex-1 flex-col pb-[45px]">
      <ShapeTable />
      <div className="ml-[19px] flex text-[#999999]">
        <button aria-label="Add shape" className={`${raised} h-[19px] w-6`}>
          <Icon w={10} h={10}><path d="M5 0v10M0 5h10" strokeWidth="2" /></Icon>
        </button>
        <button aria-label="Remove shape" className={`${raised} -ml-px h-[19px] w-6`}>
          <Icon w={10} h={10}><path d="M0 5h10" strokeWidth="3" /></Icon>
        </button>
      </div>
    </div>
  </div>
);

const ScrollArrow = ({ label, d }: { label: string; d: string }) => (
  <button aria-label={label} className={`${raised} h-[13px]`}>
    <Icon w={7} h={5}><path d={d} fill="#c8c8c8" stroke="none" /></Icon>
  </button>
);

const Properties = () => (
  <section className="flex min-w-0 flex-col">
    <div className="flex h-6 items-center bg-[#262626] pl-1">
      <PaneIcon className="mr-[3px]" />
      <PaneTab title="Properties" active />
    </div>
    <div className="flex h-8 items-center pl-[5px]">
      <input aria-label="Max panels" defaultValue="1" className={`${field} h-5 w-[22px]`} />
      <FaUnlock size={13} className="ml-[6px] -scale-x-100 text-black" />
      <Icon w={13} h={10} className="ml-[7px] text-[#c8c8c8]">
        <path d="M0 1.500h6M0 4.500h6M0 7.500h6" />
        <path d="M5 1l6 7M11 1L5 8" strokeWidth="2" />
      </Icon>
      <span className="mr-1 ml-2 border-b border-[#d8d8d8] pb-0.5">
        <FaPen size={12} className="text-[#d8d8d8]" />
      </span>
      <Sep />
    </div>
    <div className="flex min-h-0 flex-1">
      <div className="mt-0.5 mb-[21px] ml-[5px] grid min-w-0 flex-1">
        <div className="flex min-w-0 [grid-area:1/1]">
          <PropertiesPanel />
        </div>
        <Icon w={9} h={9} className="self-end justify-self-end text-[#909090] [grid-area:1/1]">
          <path d="M7 1.500h2M4 4.500h5M1 7.500h8" strokeWidth="2" strokeDasharray="2 1" />
        </Icon>
      </div>
      <div className="mb-1 ml-[3px] flex w-[9px] flex-col overflow-hidden bg-[#1c1c1c]">
        <ScrollArrow label="Scroll up" d="M3.500 0L7 5H0z" />
        <div className="mt-px flex flex-1 items-center justify-center rounded-xs border border-[#202020] bg-linear-to-r from-[#505050] to-[#484848]">
          <Icon w={6} h={18}>
            <path d="M1 0v18M5 0v18" stroke="#1c1c1c" strokeWidth="2" strokeDasharray="2 2" />
          </Icon>
        </div>
        <ScrollArrow label="Page up" d="M3.500 0L7 5H0z" />
        <ScrollArrow label="Scroll down" d="M0 0h7L3.500 5z" />
      </div>
    </div>
    <div className="h-px bg-black" />
  </section>
);

const App = () => {
  return (
    <main className="flex h-screen min-h-[640px] flex-col bg-[#323232] font-['DejaVu_Sans',Verdana,sans-serif] text-[11px] leading-[14px] text-[#c8c8c8]">
      <div className="h-4 shrink-0 border-b border-[#2b2b2b]" />
      <div className="grid min-h-0 flex-1 grid-cols-[630fr_715fr]">
        <Viewer />
        <Properties />
      </div>
    </main>
  );
};

export default App;
